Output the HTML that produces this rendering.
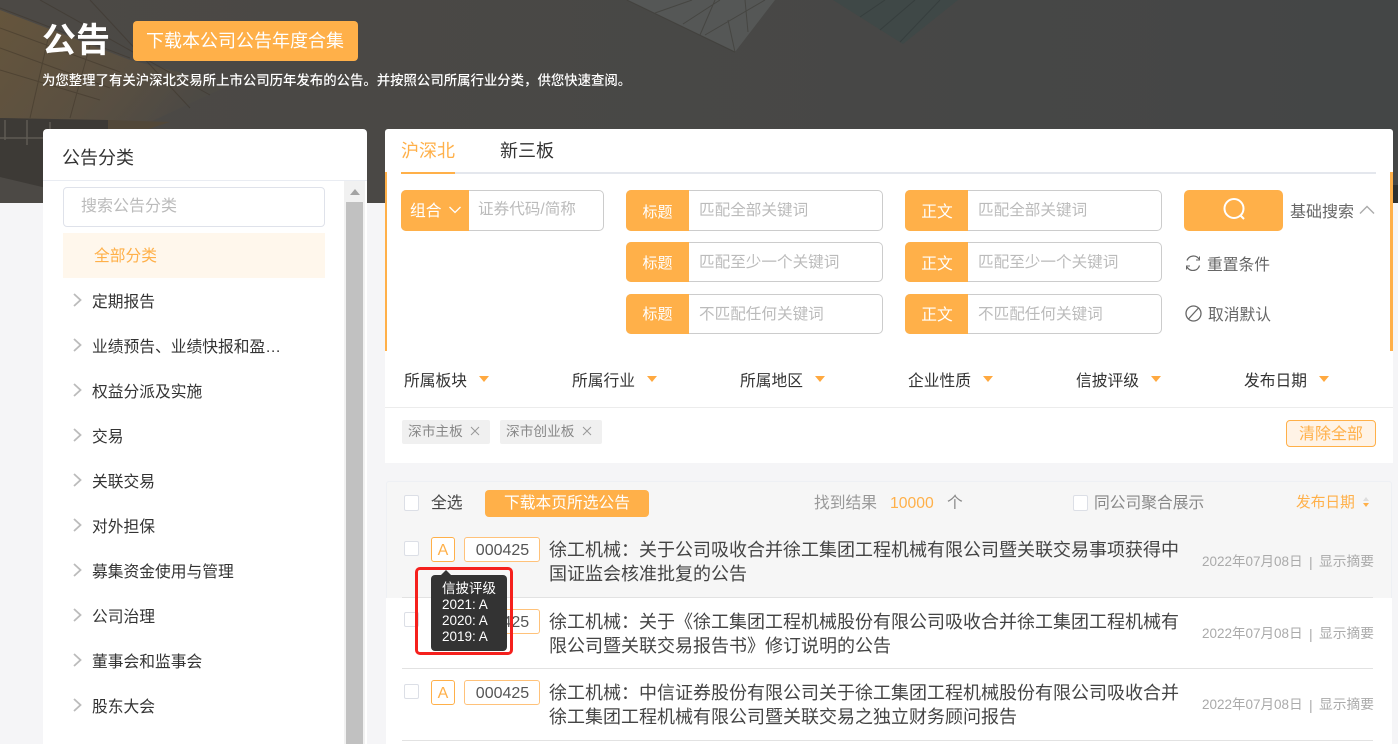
<!DOCTYPE html>
<html lang="zh">
<head>
<meta charset="utf-8">
<title>公告</title>
<style>
html,body{margin:0;padding:0;width:1398px;height:744px;overflow:hidden;background:#f5f5f7}
body{position:relative;font-family:"Liberation Sans","Noto Sans CJK SC",sans-serif;color:#333}
div,span{box-sizing:border-box}
.a{position:absolute}
.t{position:absolute;white-space:nowrap;height:24px;line-height:24px;font-size:15.75px}
.o{background:#ffb049}
.inp{position:absolute;height:41px;border:1px solid #ccc;border-radius:5px;background:#fff}
.lab{position:absolute;left:-1px;top:-1px;bottom:-1px;background:#ffb049;border-radius:5px 0 0 5px;color:#fff;font-size:15.75px;text-align:center}
.ph{position:absolute;white-space:nowrap;color:#bbb;font-size:15.6px;height:24px;line-height:24px}
.tri{position:absolute;width:0;height:0;border-left:5px solid transparent;border-right:5px solid transparent;border-top:6px solid #ffa940}
.cb{position:absolute;width:15px;height:15px;border:1px solid #dcdfe6;border-radius:2px;background:#fff}
.hl{position:absolute;left:402px;width:971px;height:1px;background:#e2e2e2}
.bd{position:absolute;border:1px solid #ffc27a;border-radius:3px;background:#fff;text-align:center;height:25px;line-height:25px;font-size:16px}
.title{font-size:18px;color:#444;left:549px}
.date{font-size:13.5px;color:#aaa;left:1202px}
.sum{font-size:13.75px;color:#aaa;left:1319px}
.sep{font-size:14px;color:#aaa;left:1309px}
.item{left:92px;color:#333}
</style>
</head>
<body>
<div class="a" style="left:0;top:0;width:1398px;height:203px;overflow:hidden;background:#484848">
<svg width="1398" height="203" viewBox="0 0 1398 203" style="position:absolute;left:0;top:0">
<defs>
<linearGradient id="g1" x1="0" y1="0" x2="1" y2="0"><stop offset="0" stop-color="#4c4945"/><stop offset="1" stop-color="#444646"/></linearGradient>
<linearGradient id="g2" x1="0" y1="0" x2="1" y2="0.4"><stop offset="0" stop-color="#7a5f35"/><stop offset="0.7" stop-color="#62533f"/><stop offset="1" stop-color="#4e4a44"/></linearGradient>
</defs>
<rect width="1398" height="203" fill="url(#g1)"/>
<polygon points="0,10 130,60 230,85 150,122 0,118" fill="url(#g2)" opacity=".55"/>
<g stroke="#3a3026" stroke-width="1" opacity=".45" fill="none">
<path d="M0 8L130 58M0 28L120 72M0 48L110 88M0 70L100 100M40 0L210 95M90 0L190 108M50 30L30 118M90 45L70 118"/>
</g>
<polygon points="0,118 108,120 110,203 0,177" fill="#3d3a36"/>
<polygon points="108,120 170,122 130,135 108,135" fill="#524839"/>
<g stroke="#5f5b54" stroke-width="1.5" fill="none"><path d="M5 120V140M27 120V145M50 122V150M0 138H60"/></g>
<polygon points="627,0 735,52 775,0" fill="#555756"/>
<g stroke="#3c3a35" stroke-width="1" fill="none" opacity=".6"><path d="M627 0L735 52M655 13L692 0M683 24L720 0M705 35L765 0M735 52L728 20M700 35L715 0M748 32L745 0"/></g>
<polygon points="833,0 903,44 958,0" fill="#3f4847"/>
<g stroke="#333a3a" stroke-width="1" fill="none" opacity=".7"><path d="M860 17L885 0M880 30L915 0M900 42L940 0"/></g>
</svg>
</div>

<div class="t" style="left:42px;top:19px;height:44px;line-height:44px;font-size:34px;font-weight:700;color:#fff">公告</div>
<div class="a o" style="left:133px;top:21px;width:225px;height:40px;border-radius:4px;color:#fff;font-size:18px;line-height:41px;padding-left:13px;white-space:nowrap">下载本公司公告年度合集</div>
<div class="t" style="left:42px;top:69px;font-size:13.4px;color:#fff;font-weight:500">为您整理了有关沪深北交易所上市公司历年发布的公告。并按照公司所属行业分类，供您快速查阅。</div>

<!-- sidebar -->
<div class="a" style="left:43px;top:129px;width:324px;height:615px;background:#fff;border-radius:4px 4px 0 0"></div>
<div class="t" style="left:62px;top:146px;font-size:18px">公告分类</div>
<div class="a" style="left:43px;top:180px;width:324px;height:1px;background:#e9ecf2"></div>
<div class="a" style="left:344px;top:181px;width:21px;height:563px;background:#f1f1f1"></div>
<div class="a" style="left:346px;top:202px;width:17px;height:542px;background:#c1c1c1"></div>
<div class="a" style="left:350px;top:189px;width:0;height:0;border-left:5px solid transparent;border-right:5px solid transparent;border-bottom:6px solid #a3a3a3"></div>
<div class="a" style="left:63px;top:187px;width:262px;height:40px;border:1px solid #dfe2ea;border-radius:4px;background:#fff"></div>
<div class="ph" style="left:81px;top:195px;font-size:16px">搜索公告分类</div>
<div class="a" style="left:63px;top:233px;width:262px;height:45px;background:#fff7ec"></div>
<div class="t" style="left:94px;top:245px;color:#ffb049">全部分类</div>

<svg class="a" style="left:70px;top:290px" width="16" height="430" viewBox="0 0 16 430" fill="none" stroke="#bbb" stroke-width="1.8">
<path d="M4 4L10.500 10L4 16M4 49L10.500 55L4 61M4 94L10.500 100L4 106M4 139L10.500 145L4 151M4 184L10.500 190L4 196M4 229L10.500 235L4 241M4 274L10.500 280L4 286M4 319L10.500 325L4 331M4 364L10.500 370L4 376M4 409L10.500 415L4 421"/>
</svg>
<div class="t item" style="top:291px">定期报告</div>
<div class="t item" style="top:336px">业绩预告、业绩快报和盈…</div>
<div class="t item" style="top:381px">权益分派及实施</div>
<div class="t item" style="top:426px">交易</div>
<div class="t item" style="top:471px">关联交易</div>
<div class="t item" style="top:516px">对外担保</div>
<div class="t item" style="top:561px">募集资金使用与管理</div>
<div class="t item" style="top:606px">公司治理</div>
<div class="t item" style="top:651px">董事会和监事会</div>
<div class="t item" style="top:696px">股东大会</div>

<!-- search panel -->
<div class="a" style="left:385px;top:129px;width:1008px;height:334px;background:#fff;border-radius:3px 3px 0 0"></div>
<div class="t" style="left:401px;top:139px;font-size:18px;color:#ffb049">沪深北</div>
<div class="t" style="left:500px;top:139px;font-size:18px;color:#333">新三板</div>
<div class="a" style="left:401px;top:172px;width:975px;height:2px;background:#e4e7ed"></div>
<div class="a o" style="left:401px;top:172px;width:54px;height:2px"></div>
<div class="a o" style="left:385px;top:172px;width:2px;height:179px"></div>
<div class="a o" style="left:1390px;top:172px;width:3px;height:179px"></div>
<div class="a" style="left:1393px;top:185px;width:5px;height:18px;background:#2e3030"></div>

<div class="inp" style="left:401px;top:190px;width:203px"><div class="lab" style="width:68px;line-height:43px;text-align:left;padding-left:9px">组合<svg width="14" height="8" viewBox="0 0 14 8" style="margin-left:6px;vertical-align:2px" fill="none" stroke="#fff" stroke-width="1.3"><path d="M1.500 1L7 6.500L12.500 1"/></svg></div></div>
<div class="ph" style="left:478px;top:198px;font-size:15.600px">证券代码/简称</div>

<div class="inp" style="left:626px;top:190px;width:257px"><div class="lab" style="width:63px;line-height:45px;font-size:15px">标题</div></div>
<div class="ph" style="left:699px;top:199px">匹配全部关键词</div>
<div class="inp" style="left:626px;top:242px;width:257px;height:40px"><div class="lab" style="width:63px;line-height:44px;font-size:15px">标题</div></div>
<div class="ph" style="left:699px;top:251px">匹配至少一个关键词</div>
<div class="inp" style="left:626px;top:294px;width:257px;height:40px"><div class="lab" style="width:63px;line-height:42px;font-size:15px">标题</div></div>
<div class="ph" style="left:699px;top:303px">不匹配任何关键词</div>

<div class="inp" style="left:905px;top:190px;width:257px"><div class="lab" style="width:63px;line-height:46px;padding-left:1px">正文</div></div>
<div class="ph" style="left:978px;top:199px">匹配全部关键词</div>
<div class="inp" style="left:905px;top:242px;width:257px;height:40px"><div class="lab" style="width:63px;line-height:45px;padding-left:1px">正文</div></div>
<div class="ph" style="left:978px;top:251px">匹配至少一个关键词</div>
<div class="inp" style="left:905px;top:294px;width:257px;height:40px"><div class="lab" style="width:63px;line-height:43px;padding-left:1px">正文</div></div>
<div class="ph" style="left:978px;top:303px">不匹配任何关键词</div>

<div class="a o" style="left:1184px;top:190px;width:99px;height:41px;border-radius:5px"></div>
<svg class="a" style="left:1220px;top:196px" width="28" height="28" viewBox="0 0 28 28" fill="none" stroke="#fff" stroke-width="2"><circle cx="14" cy="12.500" r="9.500"/><path d="M20.500 19.500L24 23"/></svg>
<div class="t" style="left:1290px;top:201px;color:#666;font-size:16px">基础搜索</div>
<svg class="a" style="left:1359px;top:204px" width="16" height="11" viewBox="0 0 16 11" fill="none" stroke="#aaa" stroke-width="1.400"><path d="M1 9.500L8 2.500L15 9.500"/></svg>
<svg class="a" style="left:1185px;top:255px" width="16" height="16" viewBox="0 0 16 16" fill="none" stroke="#666" stroke-width="1.300"><path d="M2 5.500A6.800 6.800 0 0 1 14 4M14.500 10.500A6.800 6.800 0 0 1 2 12"/><path d="M14.500 1.500V5H11M1.500 14.500V11H5" stroke-width="1"/></svg>
<div class="t" style="left:1207px;top:254px;color:#666">重置条件</div>
<svg class="a" style="left:1185px;top:305px" width="17" height="17" viewBox="0 0 17 17" fill="none" stroke="#666" stroke-width="1.300"><circle cx="8.500" cy="8.500" r="7.500"/><path d="M3.500 14L13.500 3"/></svg>
<div class="t" style="left:1208px;top:304px;color:#666">取消默认</div>

<div class="t" style="left:404px;top:370px">所属板块</div><div class="tri" style="left:479px;top:376px"></div>
<div class="t" style="left:572px;top:370px">所属行业</div><div class="tri" style="left:647px;top:376px"></div>
<div class="t" style="left:740px;top:370px">所属地区</div><div class="tri" style="left:815px;top:376px"></div>
<div class="t" style="left:908px;top:370px">企业性质</div><div class="tri" style="left:983px;top:376px"></div>
<div class="t" style="left:1076px;top:370px">信披评级</div><div class="tri" style="left:1151px;top:376px"></div>
<div class="t" style="left:1244px;top:370px">发布日期</div><div class="tri" style="left:1319px;top:376px"></div>
<div class="a" style="left:385px;top:407px;width:1008px;height:1px;background:#ececec"></div>

<div class="a" style="left:402px;top:420px;width:88px;height:24px;background:#f0f0f0;border-radius:2px"></div>
<div class="t" style="left:408px;top:420px;font-size:13.700px;color:#888">深市主板</div>
<div class="a" style="left:500px;top:420px;width:102px;height:24px;background:#f0f0f0;border-radius:2px"></div>
<div class="t" style="left:506px;top:420px;font-size:13.700px;color:#888">深市创业板</div>
<svg class="a" style="left:470px;top:426px" width="10" height="10" viewBox="0 0 10 10" stroke="#999" stroke-width="1"><path d="M1 1L9 9M9 1L1 9"/></svg>
<svg class="a" style="left:582px;top:426px" width="10" height="10" viewBox="0 0 10 10" stroke="#999" stroke-width="1"><path d="M1 1L9 9M9 1L1 9"/></svg>
<div class="a" style="left:1286px;top:420px;width:90px;height:27px;background:#fff3e6;border:1px solid #ffb049;border-radius:4px;color:#ffb049;font-size:16px;line-height:27px;text-align:center">清除全部</div>

<!-- list -->
<div class="a" style="left:386px;top:481px;width:1006px;height:263px;background:#fff;border-radius:3px 3px 0 0"></div>
<div class="a" style="left:386px;top:481px;width:1006px;height:117px;background:#f6f6f6;border-radius:3px 3px 0 0;box-shadow:inset 0 1px 0 #eef0f4,inset 1px 0 0 #eef0f4,inset -1px 0 0 #eef0f4"></div>
<div class="cb" style="left:404px;top:495px;height:16px"></div>
<div class="t" style="left:431px;top:492px;color:#444">全选</div>
<div class="a o" style="left:485px;top:490px;width:164px;height:27px;border-radius:4px;color:#fff;font-size:15.75px;line-height:28px;text-align:center">下载本页所选公告</div>
<div class="t" style="left:814px;top:492px;color:#999">找到结果</div>
<div class="t" style="left:890px;top:492px;color:#ffb049">10000</div>
<div class="t" style="left:947px;top:492px;color:#888">个</div>
<div class="cb" style="left:1073px;top:495px;height:16px"></div>
<div class="t" style="left:1094px;top:492px;color:#888">同公司聚合展示</div>
<div class="t" style="left:1296px;top:491px;font-size:14.700px;color:#ffb049">发布日期</div>
<div class="a" style="left:1363px;top:497px;width:0;height:0;border-left:3px solid transparent;border-right:3px solid transparent;border-bottom:4px solid #ddd"></div>
<div class="a" style="left:1363px;top:503px;width:0;height:0;border-left:3px solid transparent;border-right:3px solid transparent;border-top:4px solid #ffb049"></div>

<div class="hl" style="top:597px"></div>
<div class="hl" style="top:668px"></div>
<div class="hl" style="top:740px"></div>

<div class="cb" style="left:404px;top:541px"></div>
<div class="bd" style="left:431px;top:537px;width:24px;color:#ffb049;border-color:#ffb049">A</div>
<div class="bd" style="left:464px;top:537px;width:76px;color:#555;padding-left:1px">000425</div>
<div class="t title" style="top:538px">徐工机械：关于公司吸收合并徐工集团工程机械有限公司暨关联交易事项获得中</div>
<div class="t title" style="top:562px">国证监会核准批复的公告</div>
<div class="t date" style="top:550px">2022年07月08日</div><div class="t sep" style="top:550px">|</div><div class="t sum" style="top:550px">显示摘要</div>

<div class="cb" style="left:404px;top:612px"></div>
<div class="bd" style="left:464px;top:609px;width:76px;color:#555;padding-left:1px">000425</div>
<div class="t title" style="top:610px">徐工机械：关于《徐工集团工程机械股份有限公司吸收合并徐工集团工程机械有</div>
<div class="t title" style="top:634px">限公司暨关联交易报告书》修订说明的公告</div>
<div class="t date" style="top:622px">2022年07月08日</div><div class="t sep" style="top:622px">|</div><div class="t sum" style="top:622px">显示摘要</div>

<div class="cb" style="left:404px;top:684px"></div>
<div class="bd" style="left:431px;top:680px;width:24px;color:#ffb049;border-color:#ffb049">A</div>
<div class="bd" style="left:464px;top:680px;width:76px;color:#555;padding-left:1px">000425</div>
<div class="t title" style="top:681px">徐工机械：中信证券股份有限公司关于徐工集团工程机械股份有限公司吸收合并</div>
<div class="t title" style="top:705px">徐工集团工程机械有限公司暨关联交易之独立财务顾问报告</div>
<div class="t date" style="top:693px">2022年07月08日</div><div class="t sep" style="top:693px">|</div><div class="t sum" style="top:693px">显示摘要</div>

<!-- tooltip -->
<div class="a" style="left:415px;top:567px;width:98px;height:88px;border:3px solid #f5201d;border-radius:5px"></div>
<div class="a" style="left:440px;top:570px;width:0;height:0;border-left:6px solid transparent;border-right:6px solid transparent;border-bottom:6px solid #333"></div>
<div class="a" style="left:431px;top:575px;width:76px;height:76px;background:#333;border-radius:4px"></div>
<div class="t" style="left:442px;top:581px;height:16px;line-height:16px;font-size:13.500px;color:#fff">信披评级</div>
<div class="t" style="left:442px;top:597px;height:16px;line-height:16px;font-size:13.500px;color:#fff">2021: A</div>
<div class="t" style="left:442px;top:613px;height:16px;line-height:16px;font-size:13.500px;color:#fff">2020: A</div>
<div class="t" style="left:442px;top:629px;height:16px;line-height:16px;font-size:13.500px;color:#fff">2019: A</div>
</body>
</html>
